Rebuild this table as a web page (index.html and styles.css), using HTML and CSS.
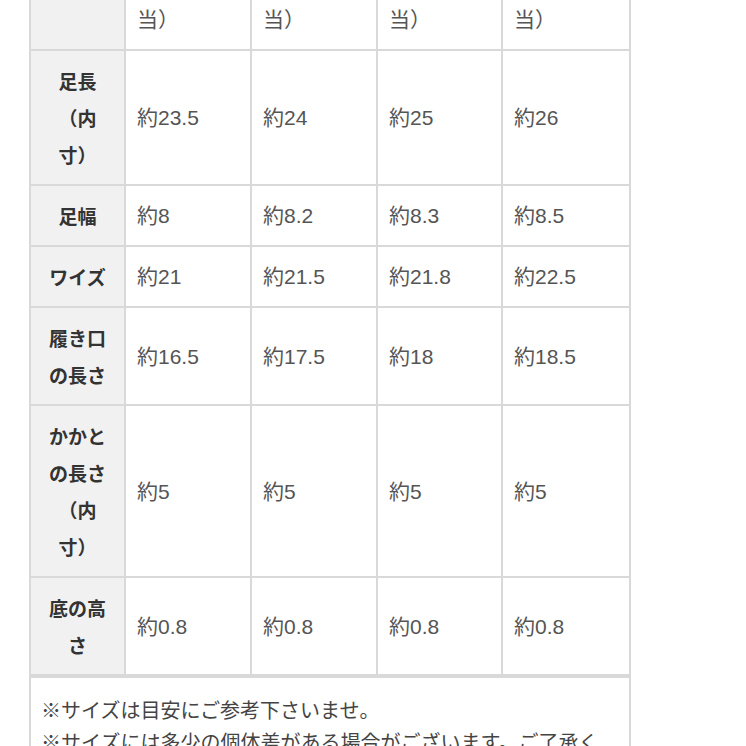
FILE: index.html
```html
<!DOCTYPE html>
<html lang="ja">
<head>
<meta charset="utf-8">
<title>サイズ表</title>
<link rel="stylesheet" href="styles.css">
</head>
<body>
<div class="page">
  <div class="size-grid">
    <div class="cell head first"></div>
    <div class="cell first">当）</div>
    <div class="cell first">当）</div>
    <div class="cell first">当）</div>
    <div class="cell first">当）</div>

    <div class="cell head">足長<br>（内<br>寸）</div>
    <div class="cell">約23.5</div>
    <div class="cell">約24</div>
    <div class="cell">約25</div>
    <div class="cell">約26</div>

    <div class="cell head">足幅</div>
    <div class="cell">約8</div>
    <div class="cell">約8.2</div>
    <div class="cell">約8.3</div>
    <div class="cell">約8.5</div>

    <div class="cell head">ワイズ</div>
    <div class="cell">約21</div>
    <div class="cell">約21.5</div>
    <div class="cell">約21.8</div>
    <div class="cell">約22.5</div>

    <div class="cell head">履き口<br>の長さ</div>
    <div class="cell">約16.5</div>
    <div class="cell">約17.5</div>
    <div class="cell">約18</div>
    <div class="cell">約18.5</div>

    <div class="cell head">かかと<br>の長さ<br>（内<br>寸）</div>
    <div class="cell">約5</div>
    <div class="cell">約5</div>
    <div class="cell">約5</div>
    <div class="cell">約5</div>

    <div class="cell head">底の高<br>さ</div>
    <div class="cell">約0.8</div>
    <div class="cell">約0.8</div>
    <div class="cell">約0.8</div>
    <div class="cell">約0.8</div>
  </div>
  <div class="note">
    <p>※サイズは目安にご参考下さいませ。</p>
    <p>※サイズには多少の個体差がある場合がございます。ご了承く</p>
  </div>
</div>
</body>
</html>
```

FILE: styles.css
```css
html, body {
  margin: 0;
  padding: 0;
  background: #ffffff;
}

body {
  font-family: "Liberation Sans", "Noto Sans CJK JP", sans-serif;
  height: 746px;
  overflow: hidden;
}

.page {
  padding-left: 29px;
}

.size-grid {
  display: grid;
  grid-template-columns: 95px 126px 126px 125px 128px;
  width: 602px;
  box-sizing: border-box;
  border-left: 2px solid #d9d9d9;
}

.cell {
  box-sizing: border-box;
  border-right: 2px solid #d9d9d9;
  border-bottom: 2px solid #d9d9d9;
  padding: 11px 8px 11px 11px;
  display: flex;
  align-items: center;
  font-size: 21px;
  line-height: 37px;
  color: #555555;
}

.cell.first {
  padding-top: 1px;
}

.cell.head {
  background: #f1f1f1;
  justify-content: center;
  text-align: center;
  padding-left: 4px;
  padding-right: 4px;
  font-family: "Noto Sans CJK JP", sans-serif;
  font-weight: 700;
  font-size: 19px;
  color: #333333;
}

.note {
  box-sizing: border-box;
  width: 602px;
  border: 2px solid #d9d9d9;
  padding: 16px 10px 10px 10px;
  font-family: "Noto Sans CJK JP", sans-serif;
  font-size: 20px;
  line-height: 32px;
  color: #444444;
  white-space: nowrap;
}

.note p {
  margin: 0;
}
```
